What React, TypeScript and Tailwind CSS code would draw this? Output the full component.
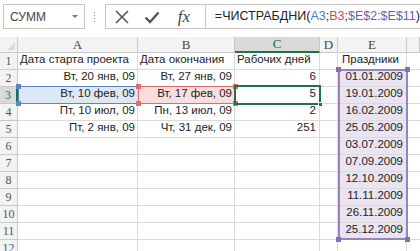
import React from 'react';

const rows = [
  { a: 'Дата старта проекта', b: 'Дата окончания', c: 'Рабочих дней', e: 'Праздники', head: true },
  { a: 'Вт, 20 янв, 09', b: 'Вт, 27 янв, 09', c: '6', e: '01.01.2009' },
  { a: 'Вт, 10 фев, 09', b: 'Вт, 17 фев, 09', c: '5', e: '19.01.2009' },
  { a: 'Пт, 10 июл, 09', b: 'Пн, 13 июл, 09', c: '2', e: '16.02.2009' },
  { a: 'Пт, 2 янв, 09', b: 'Чт, 31 дек, 09', c: '251', e: '25.05.2009' },
  { a: '', b: '', c: '', e: '03.07.2009' },
  { a: '', b: '', c: '', e: '07.09.2009' },
  { a: '', b: '', c: '', e: '12.10.2009' },
  { a: '', b: '', c: '', e: '11.11.2009' },
  { a: '', b: '', c: '', e: '26.11.2009' },
  { a: '', b: '', c: '', e: '25.12.2009' },
  { a: '', b: '', c: '', e: '' },
];

const cols = 'grid-cols-[18px_120px_97px_85px_18px_69px_1fr]';
const serif = "font-['Liberation_Serif',serif]";
const sans = "font-['Liberation_Sans',Arial,sans-serif]";

function Corner({ cls }: { cls: string }) {
  return <span className={`absolute w-[5px] h-[5px] ${cls}`} />;
}

export default function App() {
  return (
    <div className={`w-[420px] h-[251px] overflow-hidden bg-white relative ${sans}`}>
      {/* formula bar */}
      <div className="flex items-center h-[37px] pt-[4px] pb-[8px]">
        <div className="ml-[3px] w-[92px] h-[25px] border border-[#c6c6c6] flex items-center justify-between px-[6px] text-[12px] text-[#444]">
          <span>СУММ</span>
          <span className="w-0 h-0 border-l-[3px] border-r-[3px] border-t-[3px] border-l-transparent border-r-transparent border-t-[#777]" />
        </div>
        <div className="w-[23px] flex flex-col items-center gap-[2px]">
          <span className="w-[1px] h-[1px] bg-[#999]" />
          <span className="w-[1px] h-[1px] bg-[#999]" />
          <span className="w-[1px] h-[1px] bg-[#999]" />
          <span className="w-[1px] h-[1px] bg-[#999]" />
        </div>
        <div className="flex-1 h-[25px] border border-r-0 border-[#c6c6c6] flex items-center">
          <div className="w-[99px] flex items-center h-full">
            <svg width="16" height="16" viewBox="0 0 16 16" className="ml-[8px]">
              <path d="M2 2 L14 14 M14 2 L2 14" stroke="#555" strokeWidth="1.6" fill="none" />
            </svg>
            <svg width="16" height="16" viewBox="0 0 16 16" className="ml-[14px]">
              <path d="M1.5 8.5 L6 13 L14.5 3.5" stroke="#555" strokeWidth="2.4" fill="none" />
            </svg>
            <span className={`ml-[18px] text-[17px] italic text-[#444] ${serif}`}>fx</span>
          </div>
          <div className="h-full border-l border-[#c6c6c6] flex items-center pl-[9px] text-[12.5px] text-[#222] whitespace-nowrap">
            =ЧИСТРАБДНИ(<span className="text-[#4a7bc8]">A3</span>;<span className="text-[#d0484f]">B3</span>;<span className="text-[#7a58a8]">$E$2:$E$11</span>)
          </div>
        </div>
      </div>

      {/* sheet */}
      <div className="relative">
        <div className={`grid ${cols} grid-rows-[16px_repeat(12,17px)] text-[11.5px] text-[#222]`}>
          <div className="bg-[#f3f3f3] border-r border-b border-[#c9c9c9] relative">
            <svg width="8" height="8" className="absolute right-[2px] bottom-[2px]"><path d="M8 0 L8 8 L0 8 Z" fill="#dcdcdc" /></svg>
          </div>
          {['A', 'B', 'C', 'D', 'E', ''].map((l) => (
            <div
              key={l || 'f'}
              className={`flex items-center justify-center border-r border-[#c9c9c9] text-[13px] ${serif} ${
                l === 'C'
                  ? 'bg-[#dadada] text-[#217346] border-b-2 border-b-[#217346]'
                  : 'bg-[#f3f3f3] text-[#444] border-b border-b-[#c9c9c9]'
              }`}
            >
              {l}
            </div>
          ))}
          {rows.map((r, i) => {
            const n = i + 1;
            const sel = n === 3;
            return (
              <React.Fragment key={n}>
                <div
                  className={`flex items-center justify-center border-b border-[#c9c9c9] text-[12px] ${serif} ${
                    sel ? 'bg-[#dadada] text-[#217346] border-r-2 border-r-[#217346]' : 'bg-[#f3f3f3] text-[#555] border-r border-r-[#c9c9c9]'
                  }`}
                >
                  {n}
                </div>
                <div className={`flex items-end pb-[1px] border-r border-b border-[#dadada] whitespace-nowrap ${r.head ? 'pl-[2px] justify-start' : 'pr-[2px] justify-end'} ${sel ? 'bg-[#dde8f6]' : ''}`}>
                  {r.a}
                </div>
                <div className={`flex items-end pb-[1px] border-r border-b border-[#dadada] whitespace-nowrap ${r.head ? 'pl-[2px] justify-start' : 'pr-[2px] justify-end'} ${sel ? 'bg-[#f9dede]' : ''}`}>
                  {r.b}
                </div>
                <div className={`flex items-end pb-[1px] border-r border-b border-[#dadada] whitespace-nowrap ${r.head ? 'pl-[2px] justify-start' : 'pr-[3px] justify-end'}`}>
                  {r.c}
                </div>
                <div className="border-r border-b border-[#dadada]" />
                <div className={`flex items-end pb-[1px] border-r border-b border-[#dadada] whitespace-nowrap ${r.head ? 'pl-[4px] justify-start' : 'pr-[3px] justify-end'} ${n >= 2 && n <= 11 ? 'bg-[#e9e4f0]' : ''}`}>
                  {r.e}
                </div>
                <div className="border-b border-[#dadada]" />
              </React.Fragment>
            );
          })}
        </div>

        {/* A3 range */}
        <div className="absolute left-[18px] top-[49px] w-[121px] h-[18px] border border-[#5b87c9]">
          <Corner cls="-left-[3px] -top-[3px] bg-[#5b87c9]" />
          <Corner cls="-left-[3px] -bottom-[3px] bg-[#5b87c9]" />
          <Corner cls="-right-[3px] -top-[3px] bg-[#5b87c9]" />
          <Corner cls="-right-[3px] -bottom-[3px] bg-[#5b87c9]" />
        </div>
        {/* B3 range */}
        <div className="absolute left-[138px] top-[49px] w-[98px] h-[18px] border border-[#e06a70]">
          <Corner cls="-left-[3px] -top-[3px] bg-[#e06a70]" />
          <Corner cls="-left-[3px] -bottom-[3px] bg-[#e06a70]" />
          <Corner cls="-right-[3px] -top-[3px] bg-[#e06a70]" />
          <Corner cls="-right-[3px] -bottom-[3px] bg-[#e06a70]" />
        </div>
        {/* active cell C3 */}
        <div className="absolute left-[234px] top-[48px] w-[87px] h-[20px] border-2 border-[#217346]">
          <Corner cls="-right-[4px] -bottom-[4px] bg-[#217346] border border-white" />
        </div>
        {/* E2:E11 range */}
        <div className="absolute left-[338px] top-[32px] w-[70px] h-[171px] border-2 border-[#9a82bd]">
          <Corner cls="-left-[4px] -top-[4px] bg-[#8a6fb0]" />
          <Corner cls="-left-[4px] -bottom-[4px] bg-[#8a6fb0]" />
          <Corner cls="-right-[4px] -top-[4px] bg-[#8a6fb0]" />
          <Corner cls="-right-[4px] -bottom-[4px] bg-[#8a6fb0]" />
        </div>
      </div>
    </div>
  );
}
